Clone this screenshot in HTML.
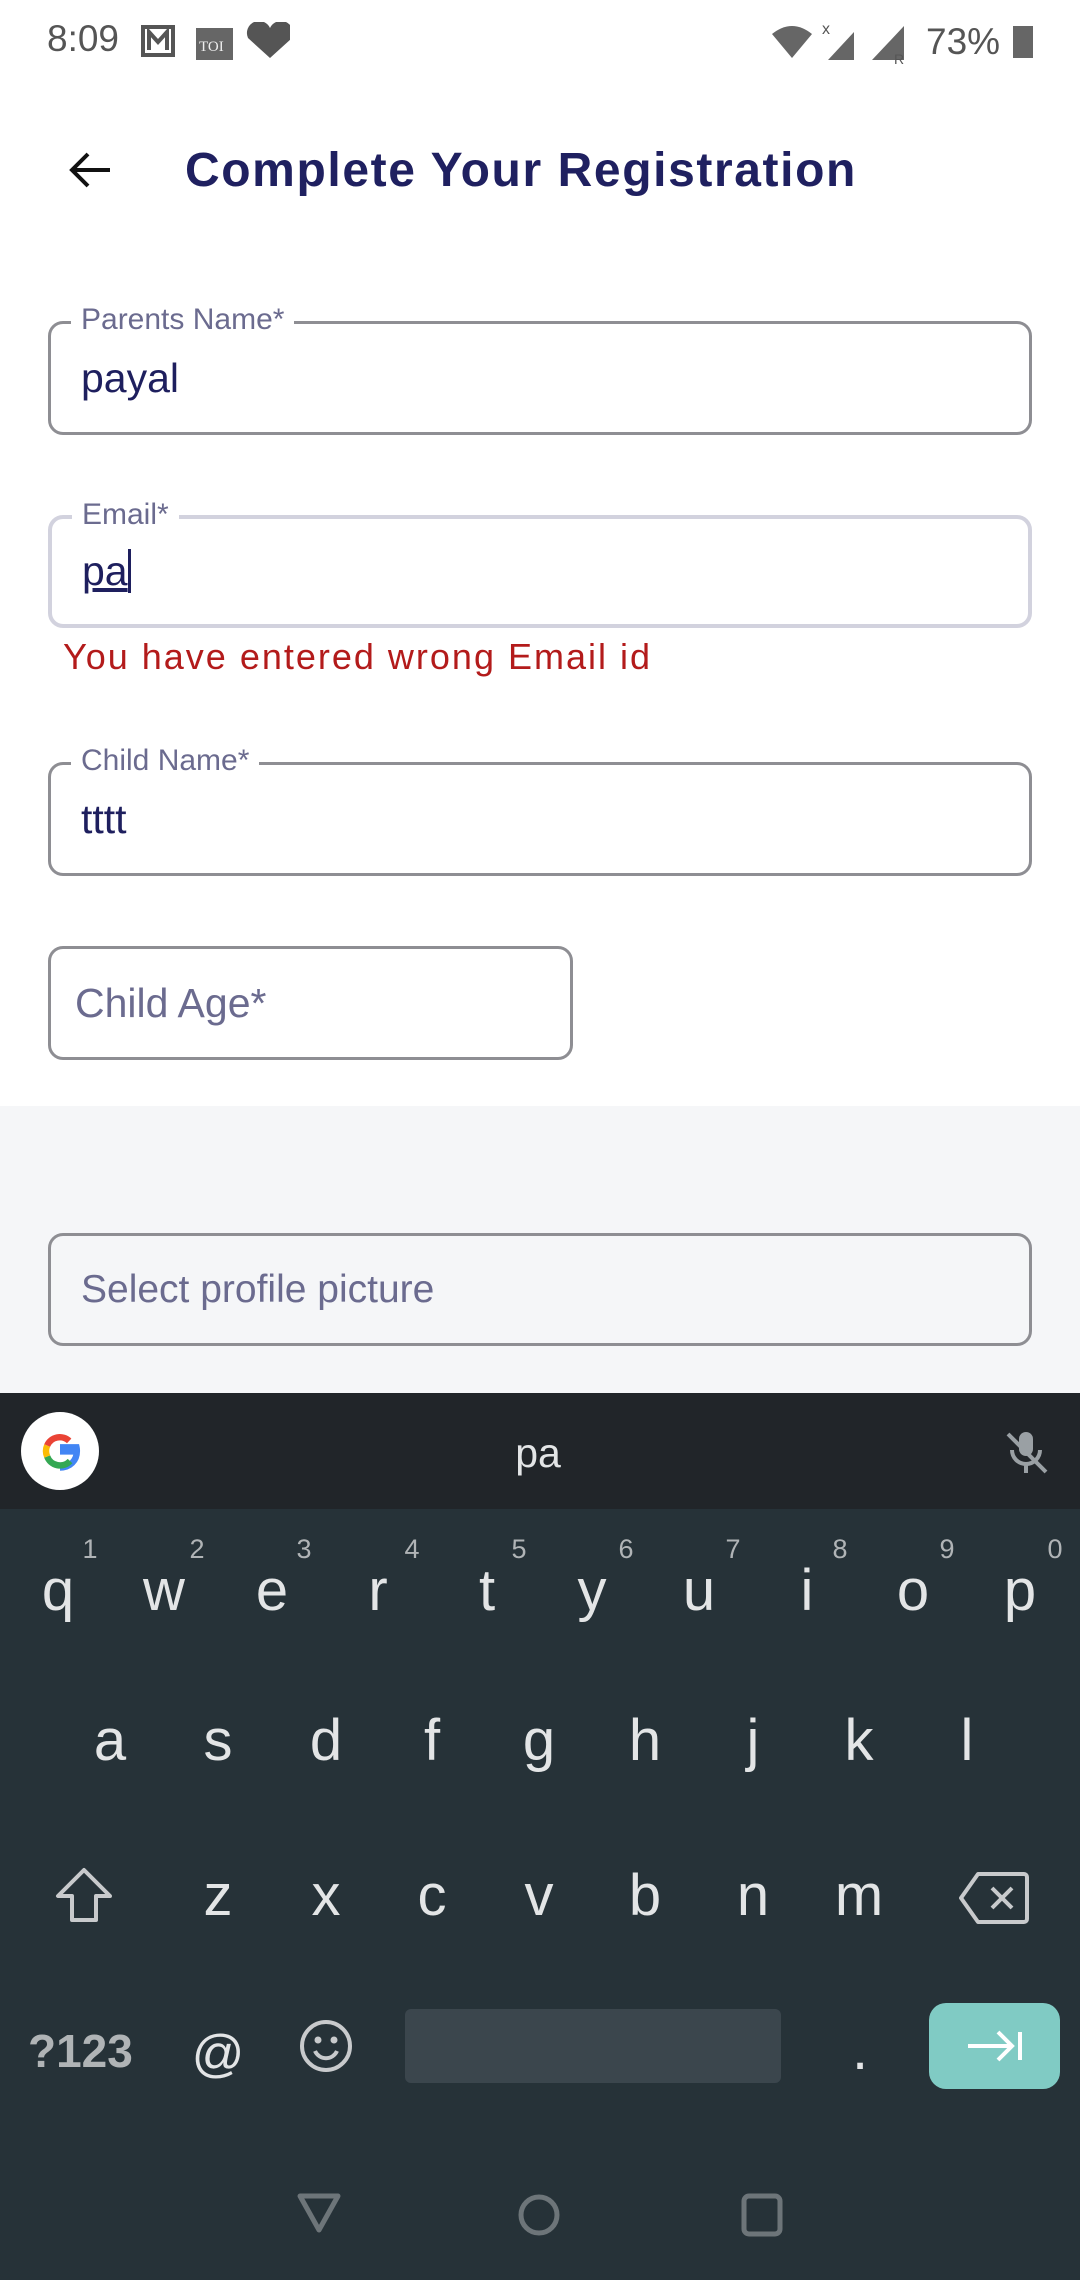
<!DOCTYPE html>
<html><head><meta charset="utf-8"><style>
*{margin:0;padding:0;box-sizing:border-box}
body{width:1080px;height:2280px;position:relative;background:#fff;font-family:"Liberation Sans",sans-serif;overflow:hidden}
.a{position:absolute}
.fld{position:absolute;border:3px solid #8e8e93;border-radius:15px}
.lbl{position:absolute;background:#fff;padding:0 10px;font-size:30px;color:#6b6b8f;top:-22px;left:20px;line-height:36px}
.val{position:absolute;left:30px;font-size:41px;color:#1e1f5e}
.k{position:absolute;width:108px;text-align:center;color:#e3e5e6;font-size:58px;line-height:60px}
.n{position:absolute;width:30px;text-align:center;color:#b0b4b6;font-size:27px}
</style></head><body>
<div class="a" style="left:47px;top:18px;font-size:37px;color:#555">8:09</div>
<svg class="a" style="left:140px;top:22px" width="150" height="40">
<rect x="3" y="5" width="30" height="28" fill="none" stroke="#555" stroke-width="4"/><path d="M9 28V10l9 10 9-10v18" fill="none" stroke="#555" stroke-width="4"/>
<rect x="56" y="6" width="37" height="32" fill="#666"/><text x="59" y="29" font-size="15" fill="#eee" font-family="Liberation Serif">TOI</text>
<path d="M130 36 L108 16 a9 9 0 0 1 22-10 a9 9 0 0 1 22 10z" fill="#555"/>
</svg>
<svg class="a" style="left:770px;top:20px" width="270" height="44">
<path d="M2 14 Q22 -2 42 14 L22 38z" fill="#666"/><text x="52" y="14" font-size="16" fill="#555">x</text>
<path d="M58 40 L84 12 V40z" fill="#666"/><path d="M102 40 L134 6 V40z" fill="#666"/><text x="124" y="44" font-size="14" fill="#555">R</text>
<text x="156" y="34" font-size="37" fill="#555" font-family="Liberation Sans">73%</text>
<rect x="243" y="6" width="20" height="32" fill="#666"/>
</svg>
<svg class="a" style="left:66px;top:150px" width="48" height="40"><path d="M44 20H6M22 4 6 20l16 16" fill="none" stroke="#111" stroke-width="4"/></svg>
<div class="a" style="left:185px;top:143px;font-size:48px;font-weight:bold;color:#1f2060;letter-spacing:1.6px">Complete Your Registration</div>
<div class="fld" style="left:48px;top:321px;width:984px;height:114px"><div class="lbl">Parents Name*</div><div class="val" style="top:31px">payal</div></div>
<div class="fld" style="left:48px;top:515px;width:984px;height:113px;border:4px solid #d2d2de"><div class="lbl">Email*</div><div class="val" style="top:29px;text-decoration:underline">pa<span style="display:inline-block;width:3px;height:44px;background:#1e1f5e;vertical-align:-8px"></span></div></div>
<div class="a" style="left:63px;top:636px;font-size:36px;color:#b31b1b;letter-spacing:2px">You have entered wrong Email id</div>
<div class="fld" style="left:48px;top:762px;width:984px;height:114px"><div class="lbl">Child Name*</div><div class="val" style="top:31px">tttt</div></div>
<div class="fld" style="left:48px;top:946px;width:525px;height:114px"><div class="val" style="top:31px;left:24px;color:#6b6b8f">Child Age*</div></div>
<div class="a" style="left:0;top:1106px;width:1080px;height:287px;background:#f5f6f8"></div>
<div class="fld" style="left:48px;top:1233px;width:984px;height:113px;background:#f5f6f8"><div class="val" style="top:32px;color:#6b6b8f;font-size:39px">Select profile picture</div></div>
<div class="a" style="left:0;top:1393px;width:1080px;height:116px;background:#212529"></div>
<div class="a" style="left:21px;top:1412px;width:78px;height:78px;border-radius:50%;background:#fff"></div>
<svg class="a" style="left:38px;top:1429px" width="44" height="44" viewBox="0 0 48 48"><path d="M24 20h18c.3 1.3.4 2.6.4 4 0 10.5-7.5 18-18.4 18" fill="none" stroke="#4285f4" stroke-width="7"/><path d="M24 20h18v8H24z" fill="#4285f4"/><path d="M35 35A15 15 0 0 1 10 30" fill="none" stroke="#34a853" stroke-width="7"/><path d="M10 30a15 15 0 0 1 0-12" fill="none" stroke="#fbbc05" stroke-width="7"/><path d="M10 18a15 15 0 0 1 24-5" fill="none" stroke="#ea4335" stroke-width="7"/></svg>
<div class="a" style="left:488px;top:1430px;width:100px;text-align:center;font-size:41px;color:#e3e5e6">pa</div>
<svg class="a" style="left:1002px;top:1428px" width="50" height="50"><rect x="17" y="4" width="14" height="24" rx="7" fill="#9aa0a4"/><path d="M10 22a14 14 0 0 0 28 0M24 36v9" fill="none" stroke="#9aa0a4" stroke-width="4"/><path d="M6 6l38 38" stroke="#9aa0a4" stroke-width="4"/></svg>
<div class="a" style="left:0;top:1509px;width:1080px;height:771px;background:#263238"></div>
<div class="k" style="left:4px;top:1561px">q</div><div class="k" style="left:110px;top:1561px">w</div><div class="k" style="left:218px;top:1561px">e</div><div class="k" style="left:324px;top:1561px">r</div><div class="k" style="left:433px;top:1561px">t</div><div class="k" style="left:538px;top:1561px">y</div><div class="k" style="left:645px;top:1561px">u</div><div class="k" style="left:753px;top:1561px">i</div><div class="k" style="left:859px;top:1561px">o</div><div class="k" style="left:966px;top:1561px">p</div>
<div class="n" style="left:75px;top:1534px">1</div><div class="n" style="left:182px;top:1534px">2</div><div class="n" style="left:289px;top:1534px">3</div><div class="n" style="left:397px;top:1534px">4</div><div class="n" style="left:504px;top:1534px">5</div><div class="n" style="left:611px;top:1534px">6</div><div class="n" style="left:718px;top:1534px">7</div><div class="n" style="left:825px;top:1534px">8</div><div class="n" style="left:932px;top:1534px">9</div><div class="n" style="left:1040px;top:1534px">0</div>
<div class="k" style="left:56px;top:1711px">a</div><div class="k" style="left:164px;top:1711px">s</div><div class="k" style="left:272px;top:1711px">d</div><div class="k" style="left:378px;top:1711px">f</div><div class="k" style="left:485px;top:1711px">g</div><div class="k" style="left:591px;top:1711px">h</div><div class="k" style="left:699px;top:1711px">j</div><div class="k" style="left:805px;top:1711px">k</div><div class="k" style="left:913px;top:1711px">l</div>
<svg class="a" style="left:54px;top:1866px" width="60" height="60"><path d="M30 4 4 30h14v24h24V30h14z" fill="none" stroke="#c8cacc" stroke-width="4" stroke-linejoin="round"/></svg>
<div class="k" style="left:164px;top:1866px">z</div><div class="k" style="left:272px;top:1866px">x</div><div class="k" style="left:378px;top:1866px">c</div><div class="k" style="left:485px;top:1866px">v</div><div class="k" style="left:591px;top:1866px">b</div><div class="k" style="left:699px;top:1866px">n</div><div class="k" style="left:805px;top:1866px">m</div>
<svg class="a" style="left:958px;top:1870px" width="72" height="56"><path d="M20 4h46a3 3 0 0 1 3 3v42a3 3 0 0 1-3 3H20L3 28z" fill="none" stroke="#c8cacc" stroke-width="4" stroke-linejoin="round"/><path d="M34 18l20 20M54 18 34 38" stroke="#c8cacc" stroke-width="4"/></svg>
<div class="a" style="left:28px;top:2024px;font-size:46px;color:#b0b4b6;font-weight:bold">?123</div>
<div class="k" style="left:164px;top:2024px;font-size:52px">@</div>
<svg class="a" style="left:298px;top:2018px" width="56" height="56"><circle cx="28" cy="28" r="24" fill="none" stroke="#c8cacc" stroke-width="4"/><circle cx="20" cy="22" r="3.5" fill="#c8cacc"/><circle cx="36" cy="22" r="3.5" fill="#c8cacc"/><path d="M17 33a12 12 0 0 0 22 0" fill="none" stroke="#c8cacc" stroke-width="4"/></svg>
<div class="a" style="left:405px;top:2009px;width:376px;height:74px;border-radius:6px;background:#3b464d"></div>
<div class="k" style="left:806px;top:2020px">.</div>
<div class="a" style="left:929px;top:2003px;width:131px;height:86px;border-radius:17px;background:#80cbc4"></div>
<svg class="a" style="left:964px;top:2026px" width="62" height="40"><path d="M4 20h44M34 6l14 14-14 14M56 6v28" fill="none" stroke="#fff" stroke-width="4"/></svg>
<svg class="a" style="left:296px;top:2190px" width="46" height="46"><path d="M4 6h38L23 40z" fill="none" stroke="#6d7579" stroke-width="5" stroke-linejoin="round"/></svg>
<svg class="a" style="left:516px;top:2192px" width="46" height="46"><circle cx="23" cy="23" r="18" fill="none" stroke="#6d7579" stroke-width="5"/></svg>
<svg class="a" style="left:740px;top:2192px" width="46" height="46"><rect x="4" y="4" width="36" height="38" rx="5" fill="none" stroke="#6d7579" stroke-width="5"/></svg>
</body></html>
